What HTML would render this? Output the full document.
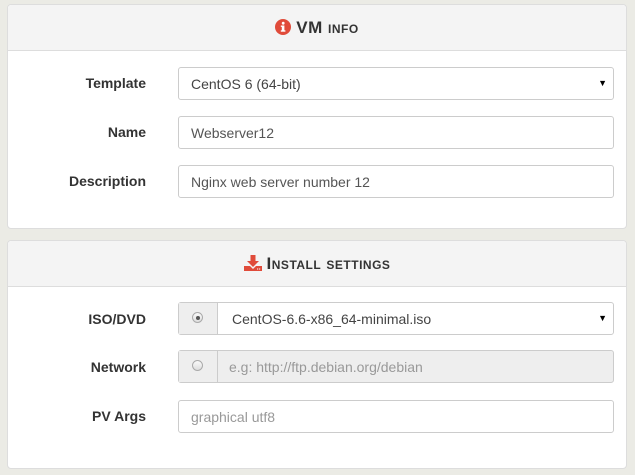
<!DOCTYPE html>
<html><head><meta charset="utf-8"><style>
body{margin:0;width:635px;height:475px;background:#ebebe5;font-family:"Liberation Sans",sans-serif;position:relative;overflow:hidden}
.panel{position:absolute;left:7px;width:620px;background:#fff;border:1px solid #ddd;border-radius:4px;box-sizing:border-box}
.hd{height:45px;background:#f4f4f4;border-bottom:1px solid #ddd;border-radius:4px 4px 0 0;text-align:center;font-family:"Liberation Sans",sans-serif;font-weight:bold;color:#333;font-size:17px;line-height:45px;font-variant:small-caps;letter-spacing:0.5px}
.hd svg{vertical-align:-2px;margin-right:5px}
.lab{position:absolute;right:480px;font-family:"Liberation Sans",sans-serif;font-weight:bold;font-size:14px;color:#333;text-align:right}
.inp{position:absolute;left:170px;width:436px;height:33px;border:1px solid #ccc;border-radius:3px;box-sizing:border-box;font-size:14px;color:#555;line-height:29px;padding-top:2px;padding-left:12px}
.arr{position:absolute;right:6px;top:0;line-height:31px;font-size:9px;color:#000}
.addon{position:absolute;left:0;top:0;width:38px;height:31px;background:#eee;border-right:1px solid #ccc}
.rad{position:absolute;left:13px;top:9px;width:11px;height:11px;border-radius:50%;border:1px solid #aaa;box-sizing:border-box;background:linear-gradient(#fafafa,#ddd)}
.rad.on::after{content:"";position:absolute;left:2.5px;top:2.5px;width:4px;height:4px;border-radius:50%;background:#555}
</style></head><body>
<div class="panel" style="top:4px;height:225px">
<div class="hd"><svg width="16" height="16" viewBox="0 0 16 16"><circle cx="8" cy="8" r="8" fill="#e04b3a"/><rect x="6.8" y="6.5" width="2.6" height="6" fill="#fff"/><rect x="5.8" y="6.5" width="3" height="1.4" fill="#fff"/><rect x="5.8" y="11.3" width="4.6" height="1.4" fill="#fff"/><circle cx="8.2" cy="4.2" r="1.4" fill="#fff"/></svg>VM info</div>
<div class="lab" style="top:70px">Template</div>
<div class="inp" style="top:62px;color:#444">CentOS 6 (64-bit)<span class="arr">▼</span></div>
<div class="lab" style="top:119px">Name</div>
<div class="inp" style="top:111px">Webserver12</div>
<div class="lab" style="top:168px">Description</div>
<div class="inp" style="top:160px">Nginx web server number 12</div>
</div>
<div class="panel" style="top:240px;height:229px">
<div class="hd"><svg width="18" height="16" viewBox="0 0 18 16"><rect x="6.5" y="0" width="5" height="6" fill="#e04b3a"/><path d="M3 6h12l-6 6z" fill="#e04b3a"/><path d="M0 11h6l3 3 3-3h6v5H0z" fill="#e04b3a"/><rect x="13" y="13.5" width="1.2" height="1" fill="#fff"/><rect x="15" y="13.5" width="1.2" height="1" fill="#fff"/></svg>Install settings</div>
<div class="lab" style="top:70px">ISO/DVD</div>
<div class="inp" style="top:61px;padding-left:53px;color:#444"><div class="addon"><div class="rad on"></div></div>CentOS-6.6-x86_64-minimal.iso<span class="arr">▼</span></div>
<div class="lab" style="top:118px">Network</div>
<div class="inp" style="top:109px;padding-left:50px;background:#eee;color:#999"><div class="addon"><div class="rad"></div></div>e.g: http://ftp.debian.org/debian</div>
<div class="lab" style="top:167px">PV Args</div>
<div class="inp" style="top:159px;color:#999">graphical utf8</div>
</div>
</body></html>
